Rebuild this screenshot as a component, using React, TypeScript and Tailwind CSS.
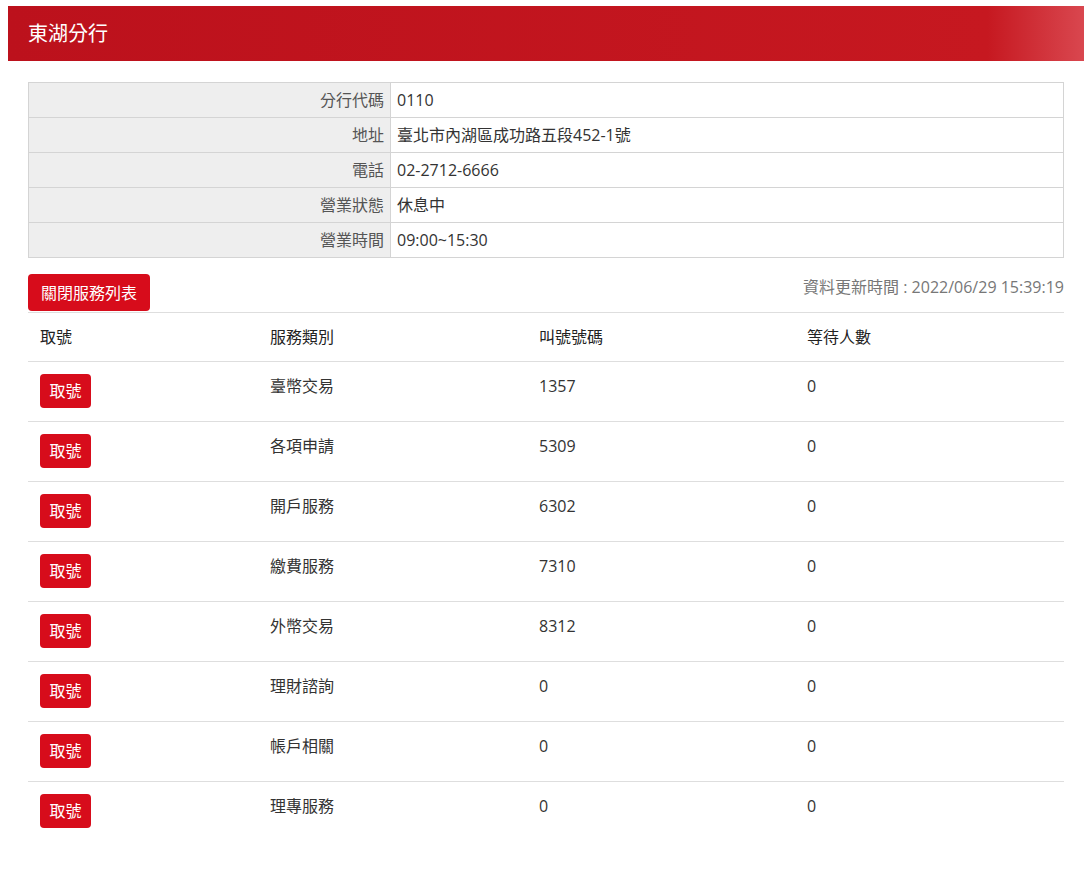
const info = [
  { label: '分行代碼', value: '0110' },
  { label: '地址', value: '臺北市內湖區成功路五段452-1號' },
  { label: '電話', value: '02-2712-6666' },
  { label: '營業狀態', value: '休息中' },
  { label: '營業時間', value: '09:00~15:30' },
]

const services = [
  { name: '臺幣交易', number: '1357', waiting: '0' },
  { name: '各項申請', number: '5309', waiting: '0' },
  { name: '開戶服務', number: '6302', waiting: '0' },
  { name: '繳費服務', number: '7310', waiting: '0' },
  { name: '外幣交易', number: '8312', waiting: '0' },
  { name: '理財諮詢', number: '0', waiting: '0' },
  { name: '帳戶相關', number: '0', waiting: '0' },
  { name: '理專服務', number: '0', waiting: '0' },
]

export default function App() {
  return (
    <div className="min-h-[888px] bg-white pt-[6px] font-['Open_Sans','Noto_Sans_CJK_TC',sans-serif] text-[16px] text-[#333]">
      {/* Header */}
      <div className="mx-2 flex h-[55px] items-center bg-[linear-gradient(to_right,#bc111c_0%,#c61820_91%,#d9474f_100%)] px-5">
        <h1 className="text-[20px] font-normal text-white">東湖分行</h1>
      </div>

      <div className="mx-7 mt-[21px]">
        {/* Branch info */}
        <table className="w-full border-collapse border border-[#d4d4d4]">
          <tbody>
            {info.map(row => (
              <tr key={row.label} className="h-[35px]">
                <td className="w-[362px] border border-[#d4d4d4] bg-[#eeeeee] px-[6px] text-right text-[#555]">
                  {row.label}
                </td>
                <td className="border border-[#d4d4d4] px-[6px] text-[#333]">{row.value}</td>
              </tr>
            ))}
          </tbody>
        </table>

        {/* Toolbar */}
        <div className="mt-4 flex items-start justify-between">
          <button className="h-[37px] rounded-[4px] bg-[#d70c1b] px-[13px] text-[16px] text-white">
            關閉服務列表
          </button>
          <div className="mt-[1px] text-[#777]">資料更新時間 : 2022/06/29 15:39:19</div>
        </div>

        {/* Service list */}
        <table className="mt-px w-full border-collapse">
          <thead>
            <tr className="h-[49px] border-y border-[#dedede] text-left">
              <th className="w-[230px] px-3 font-normal text-[#222]">取號</th>
              <th className="w-[269px] px-3 font-normal text-[#222]">服務類別</th>
              <th className="w-[268px] px-3 font-normal text-[#222]">叫號號碼</th>
              <th className="px-3 font-normal text-[#222]">等待人數</th>
            </tr>
          </thead>
          <tbody>
            {services.map((s, i) => (
              <tr
                key={s.name}
                className={i < services.length - 1 ? 'h-[60px] border-b border-[#dedede]' : 'h-[60px]'}
              >
                <td className="px-3 pt-3 pb-[13px] align-top">
                  <button className="h-[34px] w-[51px] rounded-[4px] bg-[#d70c1b] text-[16px] text-white">
                    取號
                  </button>
                </td>
                <td className="px-3 pt-[12px] align-top text-[#333]">{s.name}</td>
                <td className="px-3 pt-[12px] align-top text-[#333]">{s.number}</td>
                <td className="px-3 pt-[12px] align-top text-[#333]">{s.waiting}</td>
              </tr>
            ))}
          </tbody>
        </table>
      </div>
    </div>
  )
}
